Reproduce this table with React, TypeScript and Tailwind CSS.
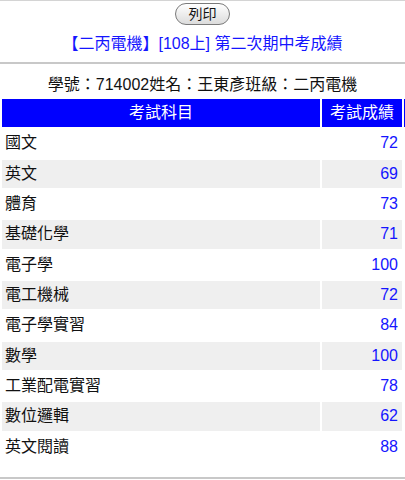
const subjects: { name: string; score: number }[] = [
  { name: "國文", score: 72 },
  { name: "英文", score: 69 },
  { name: "體育", score: 73 },
  { name: "基礎化學", score: 71 },
  { name: "電子學", score: 100 },
  { name: "電工機械", score: 72 },
  { name: "電子學實習", score: 84 },
  { name: "數學", score: 100 },
  { name: "工業配電實習", score: 78 },
  { name: "數位邏輯", score: 62 },
  { name: "英文閱讀", score: 88 },
];

const font = {
  fontFamily: '"Liberation Sans", "Noto Sans CJK TC", sans-serif',
};

export default function App() {
  return (
    <div className="w-[405px] h-[480px] overflow-hidden bg-white text-[#111]" style={font}>
      <div className="border-t border-[#d4d4d4]" />

      {/* Print button */}
      <div className="flex justify-center pt-[2px]">
        <button className="h-[22px] w-[55px] rounded-full border border-[#7a7a7a] bg-gradient-to-b from-white to-[#dcdcdc] text-[14px] leading-[20px] text-[#111]">
          列印
        </button>
      </div>

      {/* Title */}
      <div className="mt-[8px] text-center text-[16px] leading-[22px] text-[#1515ff]">
        【二丙電機】[108上] 第二次期中考成績
      </div>

      <div className="mt-[7px] border-t-2 border-[#c8c8c8]" />

      {/* Student info */}
      <div className="mt-[10px] text-center text-[16px] leading-[22px] text-[#111]">
        學號：714002姓名：王東彥班級：二丙電機
      </div>

      {/* Score table */}
      <div className="mt-[3px] grid w-[450px] grid-cols-[318px_80px_40px] auto-rows-[28.33px] gap-[2px] pl-[2px] text-[16px]">
        <div className="flex items-center justify-center bg-[#0000ff] text-white">考試科目</div>
        <div className="flex items-center justify-center bg-[#0000ff] text-white">考試成績</div>
        <div className="bg-[#0000ff]" />
        {subjects.map((s, i) => (
          <div key={s.name} className="contents">
            <div className={`flex items-center px-[3px] ${i % 2 === 1 ? "bg-[#efefef]" : ""}`}>
              {s.name}
            </div>
            <div className={`flex items-center justify-end pr-[4px] text-[#1515ff] ${i % 2 === 1 ? "bg-[#efefef]" : ""}`}>
              {s.score}
            </div>
            <div />
          </div>
        ))}
      </div>

      <div className="mt-[15.7px] border-t-2 border-[#c8c8c8]" />
    </div>
  );
}
